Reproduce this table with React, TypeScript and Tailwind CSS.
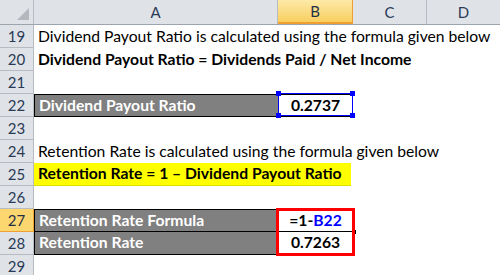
const ROWS = [19, 20, 21, 22, 23, 24, 25, 26, 27, 28, 29];
const FONT = { fontFamily: 'Lato, "Noto Sans", sans-serif' };

function RowHead({ n, active }: { n: number; active?: boolean }) {
  return (
    <div
      className={
        'w-[34px] shrink-0 h-full flex items-center justify-center border-r border-b text-[15px] ' +
        (active
          ? 'bg-[#fcd66e] border-[#f0a030] text-[#1f2f46]'
          : 'bg-[#dfe3e8] border-[#b7bcc2] text-[#2a3a55]')
      }
    >
      {n}
    </div>
  );
}

function Cells({ n }: { n: number }) {
  if (n === 19)
    return <div className="pl-[4px] whitespace-nowrap text-black">Dividend Payout Ratio is calculated using the formula given below</div>;
  if (n === 20)
    return <div className="pl-[4px] whitespace-nowrap font-bold text-black">Dividend Payout Ratio = Dividends Paid / Net Income</div>;
  if (n === 24)
    return <div className="pl-[4px] whitespace-nowrap text-black">Retention Rate is calculated using the formula given below</div>;
  if (n === 25)
    return (
      <div className="w-[317px] h-full bg-[#ffff00] border-b border-[#e0e000] pl-[4px] flex items-center whitespace-nowrap font-bold text-black">
        Retention Rate = 1 – Dividend Payout Ratio
      </div>
    );
  if (n === 22)
    return (
      <div className="flex h-full">
        <div className="w-[244px] h-full bg-[#808080] border-y border-l border-black pl-[4px] flex items-center font-bold text-white">
          Dividend Payout Ratio
        </div>
        <div className="w-[75px] h-full border border-black flex items-center justify-center font-bold text-black">
          0.2737
        </div>
      </div>
    );
  if (n === 27)
    return (
      <div className="flex h-full">
        <div className="w-[244px] h-full bg-[#808080] border-t border-b border-l border-black pl-[4px] flex items-center font-bold text-white">
          Retention Rate Formula
        </div>
        <div className="w-[75px] h-full border-t border-b border-black flex items-center justify-center font-bold text-black">
          =1-<span className="text-[#0000ff]">B22</span>
        </div>
      </div>
    );
  if (n === 28)
    return (
      <div className="flex h-full">
        <div className="w-[244px] h-full bg-[#808080] border-b border-l border-black pl-[4px] flex items-center font-bold text-white">
          Retention Rate
        </div>
        <div className="w-[75px] h-full border-b border-black flex items-center justify-center font-bold text-black">
          0.7263
        </div>
      </div>
    );
  return null;
}

export default function App() {
  return (
    <div className="w-[500px] h-[275px] overflow-hidden bg-white text-[15.7px] leading-none" style={FONT}>
      {/* column headers */}
      <div className="flex h-[25px] bg-[#dfe3e8] border-b border-[#9ea4ab] text-[15px]">
        <div className="w-[34px] shrink-0 relative border-r border-[#b7bcc2]">
          <div className="absolute right-[4px] bottom-[4px] w-0 h-0 border-l-[12px] border-l-transparent border-b-[12px] border-b-[#b4b8bd]" />
        </div>
        <div className="w-[244px] shrink-0 border-r border-[#b7bcc2] flex items-center justify-center text-[#2a3a55]">A</div>
        <div className="w-[75px] shrink-0 border-r border-b-2 border-[#f0a030] bg-gradient-to-b from-[#fde9a6] to-[#f8cf5e] flex items-center justify-center text-[#1f2f46]">B</div>
        <div className="w-[74px] shrink-0 border-r border-[#b7bcc2] flex items-center justify-center text-[#2a3a55]">C</div>
        <div className="flex-1 flex items-center justify-center text-[#2a3a55]">D</div>
      </div>

      <div className="relative">
        {ROWS.map((n) => (
          <div key={n} className="flex h-[23px]">
            <RowHead n={n} active={n === 27} />
            <div className="flex-1 h-full flex items-center">
              <Cells n={n} />
            </div>
          </div>
        ))}

        {/* copy-reference box around B22 */}
        <div className="absolute left-[278px] top-[68px] w-[75px] h-[23px] border border-[#0000ff]">
          <div className="absolute -left-[3px] -top-[3px] w-[5px] h-[5px] bg-[#0000ff]" />
          <div className="absolute -right-[3px] -top-[3px] w-[5px] h-[5px] bg-[#0000ff]" />
          <div className="absolute -left-[3px] -bottom-[3px] w-[5px] h-[5px] bg-[#0000ff]" />
          <div className="absolute -right-[3px] -bottom-[3px] w-[5px] h-[5px] bg-[#0000ff]" />
        </div>

        {/* fill handle */}
        <div className="absolute left-[352px] top-[205px] w-[4px] h-[4px] bg-black" />

        {/* red annotation box */}
        <div className="absolute left-[276px] top-[183px] w-[79px] h-[48px] border-[3px] border-[#ff0000]" />
      </div>
    </div>
  );
}
